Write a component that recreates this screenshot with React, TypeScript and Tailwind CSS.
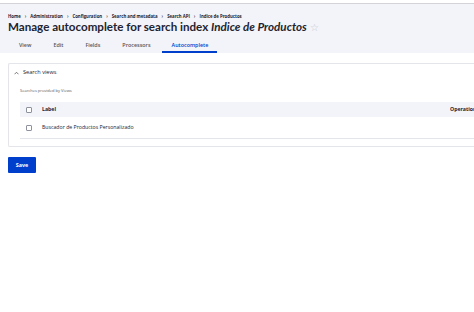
import React from 'react';

const crumbs = ['Home', 'Administration', 'Configuration', 'Search and metadata', 'Search API', 'Indice de Productos'];
const tabs = ['View', 'Edit', 'Fields', 'Processors', 'Autocomplete'];

function Checkbox() {
  return <span className="block w-[6px] h-[6px] border border-[#8e929c] rounded-[1px] bg-white" />;
}

export default function App() {
  return (
    <div className="w-[474px] h-[312px] overflow-hidden bg-white text-[#222330]" style={{ fontFamily: '"Open Sans", "Noto Sans", sans-serif' }}>
      {/* top toolbar strip */}
      <div className="h-[4px] bg-white border-b border-[#d4d4d8] shadow-[0_1px_2px_rgba(0,0,0,0.12)]" />

      {/* header */}
      <div className="bg-[#f3f4f9] pt-[9px] pl-[8px]">
        <nav className="flex items-center gap-[4px] text-[4.3px] font-bold leading-[6px] text-[#222330]">
          {crumbs.map((c, i) => (
            <React.Fragment key={c}>
              {i > 0 && <span className="text-[#55565b]">›</span>}
              <span>{c}</span>
            </React.Fragment>
          ))}
        </nav>
        <h1
          className="text-[11.6px] font-bold leading-[16px] whitespace-nowrap"
          style={{ fontFamily: 'Lato, "Open Sans", sans-serif' }}
        >
          Manage autocomplete for search index <em>Indice de Productos</em>{' '}
          <span className="text-[#c4c6cc] font-normal text-[10px]">☆</span>
        </h1>
        <div className="mt-[4px] flex h-[14px] text-[5.4px] font-semibold text-[#55565b]">
          {tabs.map(t => (
            <div
              key={t}
              className={
                t === 'Autocomplete'
                  ? 'flex items-center justify-center pl-[10px] pr-[9px] border-b-[2px] border-[#003ecc] text-[#003ecc]'
                  : 'flex items-center justify-center px-[11px] border-b-[2px] border-transparent'
              }
            >
              {t}
            </div>
          ))}
        </div>
      </div>

      {/* content */}
      <div className="pt-[10px] pl-[8px]">
        <div className="border border-r-0 border-[#e4e5ea] rounded-l-[2px] pb-[7px]">
          <div className="flex items-center gap-[4px] pl-[5px] h-[17px] text-[5.6px] text-[#222330]">
            <svg width="5" height="4" viewBox="0 0 10 8" fill="none" stroke="#55565b" strokeWidth="1.6">
              <path d="M1 6.5L5 2.5L9 6.5" />
            </svg>
            <span>Search views</span>
          </div>
          <div className="pl-[11px]">
            <p className="mt-[7px] text-[4px] text-[#55565b] leading-[6px]">Searches provided by Views</p>
            <div className="mt-[8px]">
              <div className="flex items-center h-[15px] bg-[#f3f4f9] text-[5.2px] font-bold">
                <div className="w-[22px] pl-[6px]"><Checkbox /></div>
                <span className="flex-1">Label</span>
                <span className="w-[24px] overflow-hidden whitespace-nowrap">Operations</span>
              </div>
              <div className="flex items-center h-[22px] pt-[1px] border-b border-[#e4e5ea] text-[5.2px]">
                <div className="w-[22px] pl-[6px]"><Checkbox /></div>
                <span>Buscador de Productos Personalizado</span>
              </div>
            </div>
          </div>
        </div>

        <button className="mt-[10px] w-[28px] h-[16px] bg-[#003ecc] rounded-[1px] text-white text-[5.4px] font-bold">
          Save
        </button>
      </div>
    </div>
  );
}
